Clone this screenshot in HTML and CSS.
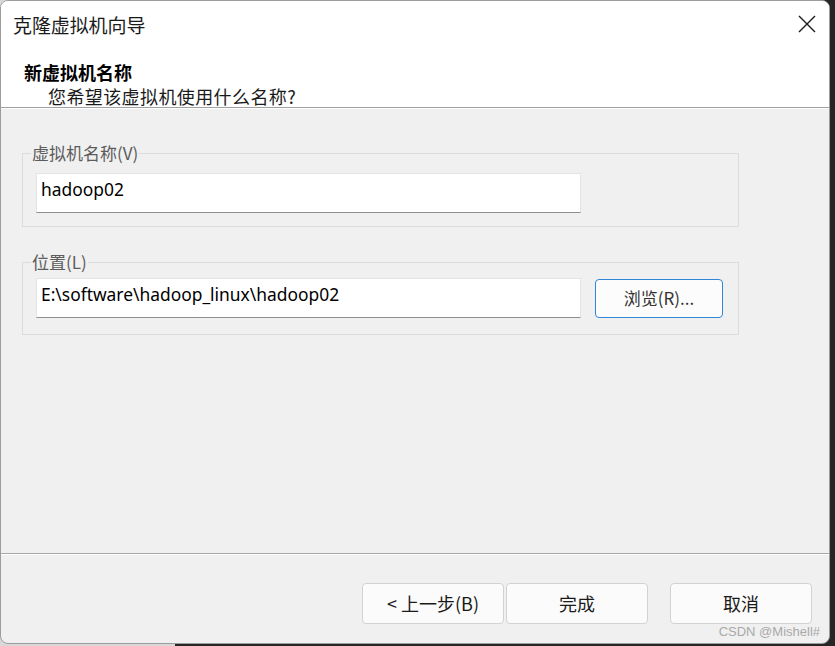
FILE: index.html
```html
<!DOCTYPE html>
<html lang="zh-CN">
<head>
<meta charset="utf-8">
<title>克隆虚拟机向导</title>
<link rel="stylesheet" href="styles.css">
</head>
<body>
<div class="window">
  <header class="header">
    <div class="titlebar">
      <span class="title">克隆虚拟机向导</span>
      <svg class="close" width="18" height="18" viewBox="0 0 18 18"><path d="M1 1 L17 17 M17 1 L1 17" stroke="#1a1a1a" stroke-width="1.4" fill="none"/></svg>
    </div>
    <div class="heading">新虚拟机名称</div>
    <div class="subheading">您希望该虚拟机使用什么名称?</div>
  </header>
  <main class="content">
    <fieldset class="group group-name">
      <legend>虚拟机名称(V)</legend>
      <div class="field">hadoop02</div>
    </fieldset>
    <fieldset class="group group-loc">
      <legend>位置(L)</legend>
      <div class="row">
        <div class="field">E:\software\hadoop_linux\hadoop02</div>
        <button class="browse">浏览(R)...</button>
      </div>
    </fieldset>
  </main>
  <footer class="footer">
    <div class="pair">
      <button class="btn">&lt; 上一步(B)</button>
      <button class="btn">完成</button>
    </div>
    <button class="btn">取消</button>
    <span class="watermark">CSDN @Mishell#</span>
  </footer>
</div>
</body>
</html>
```

FILE: styles.css
```css
html, body {
  margin: 0;
  padding: 0;
  width: 835px;
  height: 646px;
  overflow: hidden;
}
body {
  background: linear-gradient(to right, #d8d8d8 0, #d8d8d8 175px, #262626 175px);
  font-family: "Noto Sans CJK SC", "Noto Sans", sans-serif;
}
.window {
  box-sizing: border-box;
  width: 830px;
  height: 644px;
  border: 1px solid #9c9c9c;
  border-radius: 8px;
  background: #f0f0f0;
  overflow: hidden;
  display: flex;
  flex-direction: column;
  position: relative;
}
.header {
  background: #ffffff;
  border-bottom: 1px solid #a0a0a0;
  box-shadow: 0 1px 0 #ffffff;
  height: 107px;
  box-sizing: border-box;
}
.titlebar {
  height: 47px;
  display: flex;
  align-items: center;
  justify-content: space-between;
  padding: 0 13px 0 12px;
}
.title {
  font-size: 19px;
  color: #1a1a1a;
  line-height: 24px;
  letter-spacing: -0.1px;
}
.close {
  display: block;
  margin-top: -1px;
}
.heading {
  margin-top: 12px;
  padding-left: 23px;
  font-size: 18px;
  font-weight: 700;
  line-height: 24px;
  color: #000;
}
.subheading {
  padding-left: 47px;
  font-size: 18px;
  line-height: 24px;
  color: #1a1a1a;
  letter-spacing: 0.4px;
}
.content {
  flex: 1;
  display: flex;
  flex-direction: column;
  padding-top: 35px;
}
.group {
  margin: 0 0 0 21px;
  width: 717px;
  box-sizing: border-box;
  border: 1px solid #dcdcdc;
  padding: 10px 13px 13px 13px;
  min-width: 0;
}
.group legend {
  margin-left: -5px;
  padding: 0 1px;
  font-size: 17px;
  line-height: 20px;
  color: #5c5c5c;
}
.group-loc {
  margin-top: 25px;
  padding-top: 6px;
  padding-bottom: 16px;
}
.field {
  box-sizing: border-box;
  width: 545px;
  height: 40px;
  flex: none;
  background: #ffffff;
  border: 1px solid #e4e4e4;
  border-bottom: 1px solid #8e8e8e;
  padding: 3px 0 0 4px;
  font-family: "Noto Sans", sans-serif;
  font-size: 17.4px;
  line-height: 24px;
  color: #000;
}
.row {
  display: flex;
  align-items: flex-start;
  gap: 14px;
}
.browse {
  box-sizing: border-box;
  width: 128px;
  height: 39px;
  margin-top: 1px;
  background: #fcfcfc;
  border: 1px solid #2f86d6;
  border-radius: 4px;
  font-family: "Noto Sans CJK SC", sans-serif;
  font-size: 17px;
  color: #333;
  padding: 0 0 3px 0;
}
.footer {
  border-top: 1px solid #a8a8a8;
  box-shadow: inset 0 1px 0 #ffffff;
  height: 90px;
  box-sizing: border-box;
  display: flex;
  justify-content: flex-end;
  align-items: flex-start;
  gap: 22px;
  padding: 29px 17px 0 0;
}
.pair {
  display: flex;
  gap: 2px;
}
.btn {
  box-sizing: border-box;
  width: 142px;
  height: 41px;
  background: #fbfbfb;
  border: 1px solid #d2d2d2;
  border-radius: 4px;
  font-family: "Noto Sans CJK SC", "Noto Sans", sans-serif;
  font-size: 18px;
  color: #1a1a1a;
  padding: 0 0 2px 0;
}
.watermark {
  position: absolute;
  right: 9px;
  bottom: 3px;
  font-family: "Liberation Sans", Arial, sans-serif;
  font-size: 13px;
  color: #a9a9a9;
  line-height: 16px;
}
```
